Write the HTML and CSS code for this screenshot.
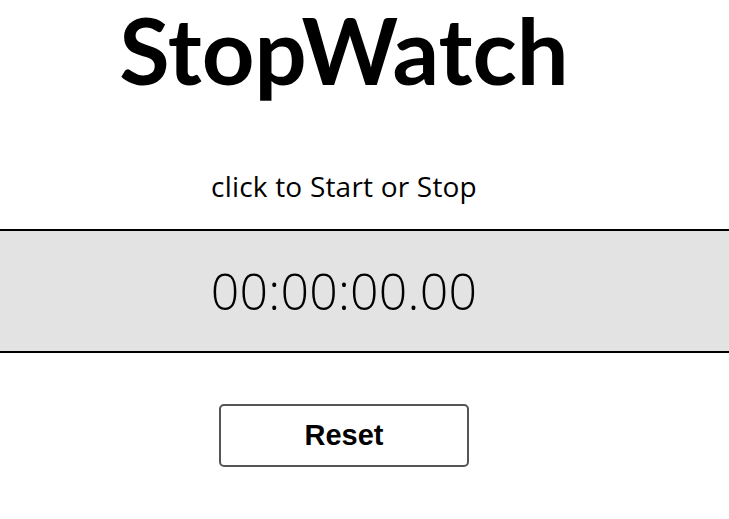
FILE: index.html
```html
<!DOCTYPE html>
<html>
<head>
<meta charset="utf-8">
<link rel="stylesheet" href="styles.css">
<title>StopWatch</title>
</head>
<body>
  <div class="col">
    <h1 class="title">StopWatch</h1>
    <p class="hint">click to Start or Stop</p>
  </div>
  <div class="band">
    <div class="col">
      <div class="time">00:00:00.00</div>
    </div>
  </div>
  <div class="col">
    <button class="reset" type="button">Reset</button>
  </div>
</body>
</html>
```

FILE: styles.css
```css
html, body {
  margin: 0;
  padding: 0;
  background: #ffffff;
  color: #000000;
  font-family: "Open Sans", "Noto Sans", sans-serif;
}

.col {
  width: 688px;
  display: flex;
  flex-direction: column;
  align-items: center;
}

.title {
  margin: -6px 0 0 0;
  font-family: Lato, "Open Sans", sans-serif;
  font-size: 92px;
  font-weight: 700;
  line-height: 112px;
  letter-spacing: 0;
}

.hint {
  margin: 63px 0 0 0;
  font-size: 28px;
  line-height: 34px;
  letter-spacing: 0.2px;
}

.band {
  margin-top: 26px;
  border-top: 2px solid #000;
  border-bottom: 2px solid #000;
  background: #e3e3e3;
  height: 120px;
  display: flex;
  align-items: center;
}

.time {
  font-family: "Open Sans", sans-serif;
  font-weight: 300;
  font-size: 50px;
  line-height: 60px;
  letter-spacing: 0.2px;
}

.reset {
  margin-top: 51px;
  width: 250px;
  height: 63px;
  border: 2px solid #555;
  border-radius: 5px;
  background: #fff;
  font-family: "Liberation Sans", Arial, sans-serif;
  font-weight: 700;
  font-size: 29px;
  color: #000;
  padding: 0;
}
```
